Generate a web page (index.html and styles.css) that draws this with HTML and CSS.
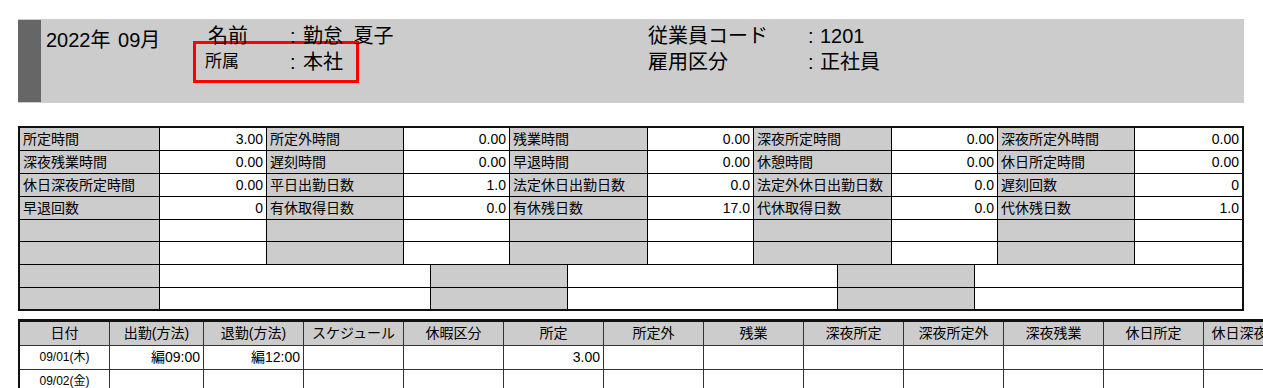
FILE: index.html
```html
<!DOCTYPE html>
<html lang="ja">
<head>
<meta charset="utf-8">
<title>勤怠 2022年09月</title>
<link rel="stylesheet" href="styles.css">
</head>
<body>
<div class="page">
  <div class="band">
    <div class="strip"></div>
    <div class="date">2022年 09月</div>
    <div class="person">
      <div class="row name-row"><span class="lbl">名前</span><span class="colon">:</span><span class="val spaced">勤怠 夏子</span></div>
      <div class="row dept-row"><span class="lbl small">所属</span><span class="colon">:</span><span class="val">本社</span></div>
    </div>
    <div class="emp">
      <div class="row"><span class="lbl wide">従業員コード</span><span class="colon">:</span><span class="val">1201</span></div>
      <div class="row second"><span class="lbl wide">雇用区分</span><span class="colon">:</span><span class="val">正社員</span></div>
    </div>
  </div>

  <div class="summary">
    <div class="sum-top">
      <div class="c lab">所定時間</div><div class="c num">3.00</div>
      <div class="c lab">所定外時間</div><div class="c num">0.00</div>
      <div class="c lab">残業時間</div><div class="c num">0.00</div>
      <div class="c lab">深夜所定時間</div><div class="c num">0.00</div>
      <div class="c lab">深夜所定外時間</div><div class="c num">0.00</div>

      <div class="c lab">深夜残業時間</div><div class="c num">0.00</div>
      <div class="c lab">遅刻時間</div><div class="c num">0.00</div>
      <div class="c lab">早退時間</div><div class="c num">0.00</div>
      <div class="c lab">休憩時間</div><div class="c num">0.00</div>
      <div class="c lab">休日所定時間</div><div class="c num">0.00</div>

      <div class="c lab">休日深夜所定時間</div><div class="c num">0.00</div>
      <div class="c lab">平日出勤日数</div><div class="c num">1.0</div>
      <div class="c lab">法定休日出勤日数</div><div class="c num">0.0</div>
      <div class="c lab">法定外休日出勤日数</div><div class="c num">0.0</div>
      <div class="c lab">遅刻回数</div><div class="c num">0</div>

      <div class="c lab">早退回数</div><div class="c num">0</div>
      <div class="c lab">有休取得日数</div><div class="c num">0.0</div>
      <div class="c lab">有休残日数</div><div class="c num">17.0</div>
      <div class="c lab">代休取得日数</div><div class="c num">0.0</div>
      <div class="c lab">代休残日数</div><div class="c num">1.0</div>

      <div class="c lab"></div><div class="c num"></div>
      <div class="c lab"></div><div class="c num"></div>
      <div class="c lab"></div><div class="c num"></div>
      <div class="c lab"></div><div class="c num"></div>
      <div class="c lab"></div><div class="c num"></div>

      <div class="c lab"></div><div class="c num"></div>
      <div class="c lab"></div><div class="c num"></div>
      <div class="c lab"></div><div class="c num"></div>
      <div class="c lab"></div><div class="c num"></div>
      <div class="c lab"></div><div class="c num"></div>
    </div>
    <div class="sum-bottom">
      <div class="c lab"></div><div class="c"></div>
      <div class="c lab"></div><div class="c"></div>
      <div class="c lab"></div><div class="c"></div>

      <div class="c lab"></div><div class="c"></div>
      <div class="c lab"></div><div class="c"></div>
      <div class="c lab"></div><div class="c"></div>
    </div>
  </div>

  <div class="daily">
    <div class="h">日付</div>
    <div class="h">出勤(方法)</div>
    <div class="h">退勤(方法)</div>
    <div class="h">スケジュール</div>
    <div class="h">休暇区分</div>
    <div class="h">所定</div>
    <div class="h">所定外</div>
    <div class="h">残業</div>
    <div class="h">深夜所定</div>
    <div class="h">深夜所定外</div>
    <div class="h">深夜残業</div>
    <div class="h">休日所定</div>
    <div class="h">休日深夜所定</div>

    <div class="d day">09/01(木)</div>
    <div class="d num">編09:00</div>
    <div class="d num">編12:00</div>
    <div class="d"></div>
    <div class="d"></div>
    <div class="d num">3.00</div>
    <div class="d"></div>
    <div class="d"></div>
    <div class="d"></div>
    <div class="d"></div>
    <div class="d"></div>
    <div class="d"></div>
    <div class="d"></div>

    <div class="d day">09/02(金)</div>
    <div class="d"></div>
    <div class="d"></div>
    <div class="d"></div>
    <div class="d"></div>
    <div class="d"></div>
    <div class="d"></div>
    <div class="d"></div>
    <div class="d"></div>
    <div class="d"></div>
    <div class="d"></div>
    <div class="d"></div>
    <div class="d"></div>
  </div>
</div>
</body>
</html>
```

FILE: styles.css
```css
html, body {
  margin: 0;
  padding: 0;
  background: #fff;
  overflow: hidden;
}

.page {
  width: 1263px;
  height: 388px;
  overflow: hidden;
  padding: 19px 0 0 18px;
  box-sizing: border-box;
  font-family: "Liberation Sans", "Noto Sans CJK JP", sans-serif;
  color: #000;
}

/* header band */
.band {
  display: flex;
  width: 1226px;
  height: 84px;
  background: #cccccc;
  box-sizing: border-box;
}

.strip {
  width: 23px;
  margin: 1px 0;
  background: #666666;
  flex: none;
}

.date {
  width: 147px;
  padding: 11px 0 0 5px;
  font-size: 20px;
  line-height: 20px;
  word-spacing: 2px;
  flex: none;
}

.person {
  width: 455px;
  padding-top: 7px;
  flex: none;
}

.row {
  display: flex;
  align-items: center;
  font-size: 20px;
  line-height: 20px;
  height: 20px;
  white-space: nowrap;
}

.name-row {
  padding-left: 15px;
}

.name-row .lbl {
  width: 82px;
}

.val.spaced {
  word-spacing: 5px;
}

.colon {
  width: 13px;
  flex: none;
}

.dept-row {
  margin-top: -5px;
  width: 166px;
  height: 42px;
  box-sizing: border-box;
  border: 3px solid #ff0000;
  padding-left: 9px;
}

.lbl.small {
  font-size: 17px;
  width: 85px;
}

.emp {
  flex: 1;
  padding-top: 7px;
}

.lbl.wide {
  width: 160px;
}

.emp .colon {
  width: 12px;
}

.emp .second {
  margin-top: 6px;
}

/* summary table */
.summary {
  margin-top: 23px;
  width: 1226px;
  box-sizing: border-box;
  border: 2px solid #111;
  background: #000;
}

.sum-top {
  display: grid;
  grid-template-columns: 139px 106px 136px 105px 137px 105px 137px 105px 136px 1fr;
  grid-template-rows: 22px 22px 22px 22px 21px 22px;
  gap: 1px;
  background: #000;
}

.sum-bottom {
  display: grid;
  margin-top: 1px;
  grid-template-columns: 139px 270px 136px 269px 136px 1fr;
  grid-template-rows: 22px 21px;
  gap: 1px;
  background: #000;
}

.c {
  background: #fff;
  font-size: 14px;
  line-height: 22px;
  padding: 0 3px;
  white-space: nowrap;
  overflow: hidden;
}

.c.lab {
  background: #cccccc;
}

.c.num {
  text-align: right;
}

/* daily table */
.daily {
  margin-top: 8px;
  display: grid;
  width: max-content;
  grid-template-columns: 89px 93px repeat(11, 99px);
  grid-template-rows: 23px 23px 23px;
  gap: 1px;
  background: #333;
  border-top: 3px solid #111;
  border-left: 2px solid #111;
}

.h {
  background: #cccccc;
  font-size: 14px;
  line-height: 23px;
  text-align: center;
  white-space: nowrap;
  overflow: hidden;
}

.d {
  background: #fff;
  font-size: 14px;
  line-height: 23px;
  padding: 0 3px;
  white-space: nowrap;
}

.d.num {
  text-align: right;
}

.d.day {
  font-size: 12px;
  text-align: center;
  padding: 0;
}
```
